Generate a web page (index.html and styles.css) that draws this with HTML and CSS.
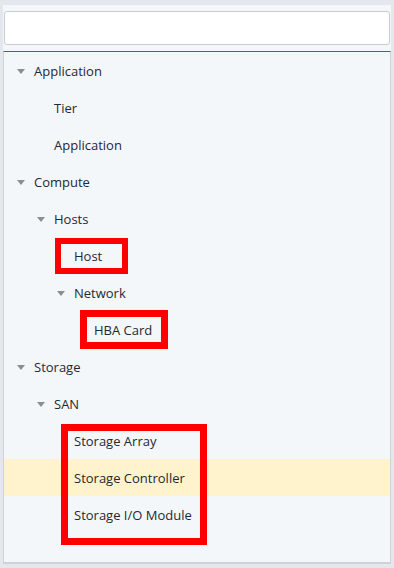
FILE: index.html
```html
<!DOCTYPE html>
<html lang="en">
<head>
    <meta charset="UTF-8">
    <meta name="viewport" content="width=device-width, initial-scale=1.0">
    <title>Class Tree</title>
    <link rel="stylesheet" href="styles.css">
</head>
<body>
    <div class="panel">
        <div class="search">
            <input type="text" class="search-input">
        </div>

        <div class="tree">
            <div class="row lvl-0"><span class="caret"></span>Application</div>
            <div class="row lvl-1 leaf">Tier</div>
            <div class="row lvl-1 leaf">Application</div>

            <div class="row lvl-0"><span class="caret"></span>Compute</div>
            <div class="row lvl-1"><span class="caret"></span>Hosts</div>
            <div class="row lvl-2 leaf"><span class="mark mark-host"></span>Host</div>
            <div class="row lvl-2"><span class="caret"></span>Network</div>
            <div class="row lvl-3 leaf"><span class="mark mark-hba"></span>HBA Card</div>

            <div class="row lvl-0"><span class="caret"></span>Storage</div>
            <div class="row lvl-1"><span class="caret"></span>SAN</div>

            <!-- the three storage leaves are boxed together -->
            <div class="group">
                <div class="row lvl-2 leaf">Storage Array</div>
                <div class="row lvl-2 leaf hover">Storage Controller</div>
                <div class="row lvl-2 leaf">Storage I/O Module</div>
            </div>
        </div>
    </div>
</body>
</html>
```

FILE: styles.css
```css
body {
    margin: 0;
    padding: 5px 3px 4px 3px;
    background: #e4e7eb;
    font-family: 'Open Sans', 'Noto Sans', sans-serif;
    font-size: 13px;
    color: #1f2833;
}
.panel {
    background: #f4f7fa;
}
.search {
    padding: 6px 1px 6px 1px;
}
.search-input {
    display: block;
    width: 100%;
    height: 34px;
    box-sizing: border-box;
    border: 1px solid #c9cdd2;
    border-radius: 3px;
    background: #fff;
    outline: none;
}
.tree {
    border-top: 1px solid #2a7099;
    border-left: 1px solid #cfd3d8;
    border-right: 1px solid #cfd3d8;
    border-bottom: 2px solid #cfd3d8;
    padding-bottom: 29px;
}
.row {
    position: relative;
    height: 37px;
    display: flex;
    align-items: center;
    white-space: nowrap;
}
.row.hover {
    background: #fef3cc;
}
/* text starts at 30px + 20px per level */
.lvl-0 { padding-left: 13px; }
.lvl-1 { padding-left: 33px; }
.lvl-2 { padding-left: 53px; }
.lvl-3 { padding-left: 73px; }
.lvl-1.leaf { padding-left: 50px; }
.lvl-2.leaf { padding-left: 70px; }
.lvl-3.leaf { padding-left: 90px; }
.caret {
    width: 0;
    height: 0;
    border-left: 4px solid transparent;
    border-right: 4px solid transparent;
    border-top: 5px solid #8a8d91;
    margin-right: 9px;
    margin-top: 1px;
}
/* red annotation boxes drawn over the tree */
.mark,
.group::after {
    position: absolute;
    box-sizing: border-box;
    border: 7px solid #ff0000;
    pointer-events: none;
}
.mark-host {
    left: 51px;
    top: 1px;
    width: 73px;
    height: 36px;
    border-width: 6px;
}
.mark-hba {
    left: 76px;
    top: -1px;
    width: 88px;
    height: 39px;
}
.group {
    position: relative;
}
.group::after {
    content: "";
    left: 57px;
    top: 2px;
    width: 146px;
    height: 121px;
}
```
